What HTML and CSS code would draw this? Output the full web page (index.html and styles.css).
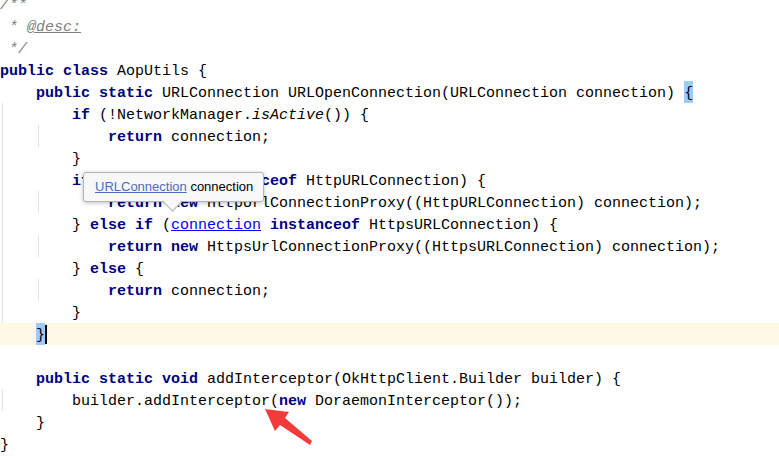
FILE: index.html
```html
<!DOCTYPE html>
<html lang="en">
<head>
    <meta charset="UTF-8">
    <title>AopUtils.java</title>
    <link rel="stylesheet" href="styles.css">
</head>
<body>
    <div class="editor">
        <div class="code">
            <div class="ln"><span class="c">/**</span></div>
            <div class="ln"><span class="c"> * <span class="tag">@desc:</span></span></div>
            <div class="ln"><span class="c"> */</span></div>
            <div class="ln"><span class="k">public class</span> AopUtils {</div>
            <div class="ln"><span class="ind"></span><span class="k">public static</span> URLConnection URLOpenConnection(URLConnection connection) <span class="match">{</span></div>
            <div class="ln"><span class="ind g"></span><span class="ind"></span><span class="k">if</span> (!NetworkManager.<span class="i">isActive</span>()) {</div>
            <div class="ln"><span class="ind g"></span><span class="ind g"></span><span class="ind"></span><span class="k">return</span> connection;</div>
            <div class="ln"><span class="ind g"></span><span class="ind"></span>}</div>
            <div class="ln"><span class="ind g"></span><span class="ind"></span><span class="k">if</span> (connection <span class="k">instanceof</span> HttpURLConnection) {</div>
            <div class="ln"><span class="ind g"></span><span class="ind g"></span><span class="ind"></span><span class="k">return new</span> HttpUrlConnectionProxy((HttpURLConnection) connection);</div>
            <div class="ln"><span class="ind g"></span><span class="ind"></span>} <span class="k">else if</span> (<span class="lnk">connection</span> <span class="k">instanceof</span> HttpsURLConnection) {</div>
            <div class="ln"><span class="ind g"></span><span class="ind g"></span><span class="ind"></span><span class="k">return new</span> HttpsUrlConnectionProxy((HttpsURLConnection) connection);</div>
            <div class="ln"><span class="ind g"></span><span class="ind"></span>} <span class="k">else</span> {</div>
            <div class="ln"><span class="ind g"></span><span class="ind g"></span><span class="ind"></span><span class="k">return</span> connection;</div>
            <div class="ln"><span class="ind g"></span><span class="ind"></span>}</div>
            <div class="ln cur"><span class="ind"></span><span class="match">}</span><span class="caret"></span></div>
            <div class="ln"></div>
            <div class="ln"><span class="ind"></span><span class="k">public static void</span> addInterceptor(OkHttpClient.Builder builder) {</div>
            <div class="ln"><span class="ind g"></span><span class="ind"></span>builder.addInterceptor(<span class="k">new</span> DoraemonInterceptor());</div>
            <div class="ln"><span class="ind"></span>}</div>
            <div class="ln">}</div>
        </div>

        <div class="tip">
            <span class="tip-link">URLConnection</span> connection
        </div>

        <svg class="arrow" width="779" height="457" viewBox="0 0 779 457">
            <polygon points="265,409 289,412 285,418 312,441 310,445 280,425 275,431" fill="#f23c3c"/>
        </svg>
    </div>
</body>
</html>
```

FILE: styles.css
```css
body {
    margin: 0;
    background-color: #fff;
    overflow: hidden;
}

.editor {
    position: relative;
    width: 779px;
    height: 457px;
    overflow: hidden;
}

.code {
    margin-top: -7px;
    font-family: "Liberation Mono", "Courier New", monospace;
    font-size: 15px;
    line-height: 26px;
    color: #000;
}

.ln {
    height: 22px;
    white-space: pre;
}

.ln.cur {
    background-color: #fdf9e4;
}

.ind {
    display: inline-block;
    width: 36px;
    height: 22px;
    vertical-align: top;
}

.ind.g {
    background: linear-gradient(#e2e2e2, #e2e2e2) no-repeat 2px 0 / 1px 100%;
}

.k {
    color: #000080;
    font-weight: bold;
}

.c {
    color: #808080;
    font-style: italic;
}

.tag {
    text-decoration: underline;
}

.i {
    font-style: italic;
}

.lnk {
    color: #0000ff;
    text-decoration: underline;
}

.match {
    display: inline-block;
    height: 22px;
    line-height: 26px;
    vertical-align: top;
    background-color: #99ccff;
}

.caret {
    display: inline-block;
    width: 2px;
    height: 19px;
    margin-top: 2px;
    vertical-align: top;
    background-color: #000;
}

.tip {
    position: absolute;
    left: 83px;
    top: 172px;
    height: 28px;
    padding: 0 10px 0 11px;
    border: 1px solid #b4b4b4;
    border-radius: 3px;
    background-color: #f8f8f8;
    box-shadow: 0 1px 4px rgba(0, 0, 0, 0.25);
    font-family: "Liberation Sans", Arial, sans-serif;
    font-size: 13px;
    line-height: 28px;
    color: #000;
    white-space: nowrap;
}

.tip::after {
    content: "";
    position: absolute;
    left: 82px;
    bottom: -8px;
    width: 12px;
    height: 12px;
    background-color: #f8f8f8;
    border-right: 1px solid #b4b4b4;
    border-bottom: 1px solid #b4b4b4;
    transform: rotate(45deg);
}

.tip-link {
    color: #4a6fbe;
    text-decoration: underline;
}

.arrow {
    position: absolute;
    left: 0;
    top: 0;
}
```
